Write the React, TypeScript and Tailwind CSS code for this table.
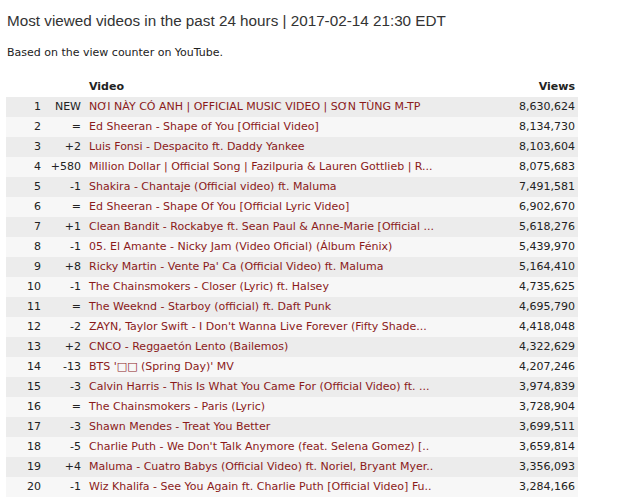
const rows: [string, string, string, string][] = [
  ["1", "NEW", "NƠI NÀY CÓ ANH | OFFICIAL MUSIC VIDEO | SƠN TÙNG M-TP", "8,630,624"],
  ["2", "=", "Ed Sheeran - Shape of You [Official Video]", "8,134,730"],
  ["3", "+2", "Luis Fonsi - Despacito ft. Daddy Yankee", "8,103,604"],
  ["4", "+580", "Million Dollar | Official Song | Fazilpuria & Lauren Gottlieb | R...", "8,075,683"],
  ["5", "-1", "Shakira - Chantaje (Official video) ft. Maluma", "7,491,581"],
  ["6", "=", "Ed Sheeran - Shape Of You [Official Lyric Video]", "6,902,670"],
  ["7", "+1", "Clean Bandit - Rockabye ft. Sean Paul & Anne-Marie [Official ...", "5,618,276"],
  ["8", "-1", "05. El Amante - Nicky Jam (Video Oficial) (Álbum Fénix)", "5,439,970"],
  ["9", "+8", "Ricky Martin - Vente Pa' Ca (Official Video) ft. Maluma", "5,164,410"],
  ["10", "-1", "The Chainsmokers - Closer (Lyric) ft. Halsey", "4,735,625"],
  ["11", "=", "The Weeknd - Starboy (official) ft. Daft Punk", "4,695,790"],
  ["12", "-2", "ZAYN, Taylor Swift - I Don't Wanna Live Forever (Fifty Shade...", "4,418,048"],
  ["13", "+2", "CNCO - Reggaetón Lento (Bailemos)", "4,322,629"],
  ["14", "-13", "BTS '□□ (Spring Day)' MV", "4,207,246"],
  ["15", "-3", "Calvin Harris - This Is What You Came For (Official Video) ft. ...", "3,974,839"],
  ["16", "=", "The Chainsmokers - Paris (Lyric)", "3,728,904"],
  ["17", "-3", "Shawn Mendes - Treat You Better", "3,699,511"],
  ["18", "-5", "Charlie Puth - We Don't Talk Anymore (feat. Selena Gomez) [..", "3,659,814"],
  ["19", "+4", "Maluma - Cuatro Babys (Official Video) ft. Noriel, Bryant Myer..", "3,356,093"],
  ["20", "-1", "Wiz Khalifa - See You Again ft. Charlie Puth [Official Video] Fu..", "3,284,166"],
];

export default function App() {
  return (
    <div className="w-[637px] h-[497px] overflow-hidden bg-white text-[#222] font-['DejaVu_Sans',Verdana,sans-serif]">
      <h1 className="pl-[7px] pt-[9px] font-['Liberation_Sans',Arial,sans-serif] text-[15.25px] font-normal leading-[24px] text-[#333]">
        Most viewed videos in the past 24 hours | 2017-02-14 21:30 EDT
      </h1>
      <p className="pl-[7px] pt-[13px] text-[11px] leading-[14px]">Based on the view counter on YouTube.</p>
      <table className="ml-[6px] mt-[17px] w-[572px] border-collapse text-[11px]">
        <thead>
          <tr className="h-[20px]">
            <th className="w-[38px]" />
            <th className="w-[40px]" />
            <th className="pl-[5px] text-left font-bold">Video</th>
            <th className="pr-[3px] text-right font-bold">Views</th>
          </tr>
        </thead>
        <tbody>
          {rows.map(([rank, change, title, views], i) => (
            <tr key={rank} className={i % 2 === 0 ? "h-[20px] bg-[#ececec]" : "h-[20px] bg-[#f7f7f7]"}>
              <td className="pr-[3px] text-right">{rank}</td>
              <td className="pr-[3px] text-right">{change}</td>
              <td className="pl-[5px] whitespace-nowrap text-[#8b1a1a]">{title}</td>
              <td className="pr-[3px] text-right">{views}</td>
            </tr>
          ))}
        </tbody>
      </table>
    </div>
  );
}
